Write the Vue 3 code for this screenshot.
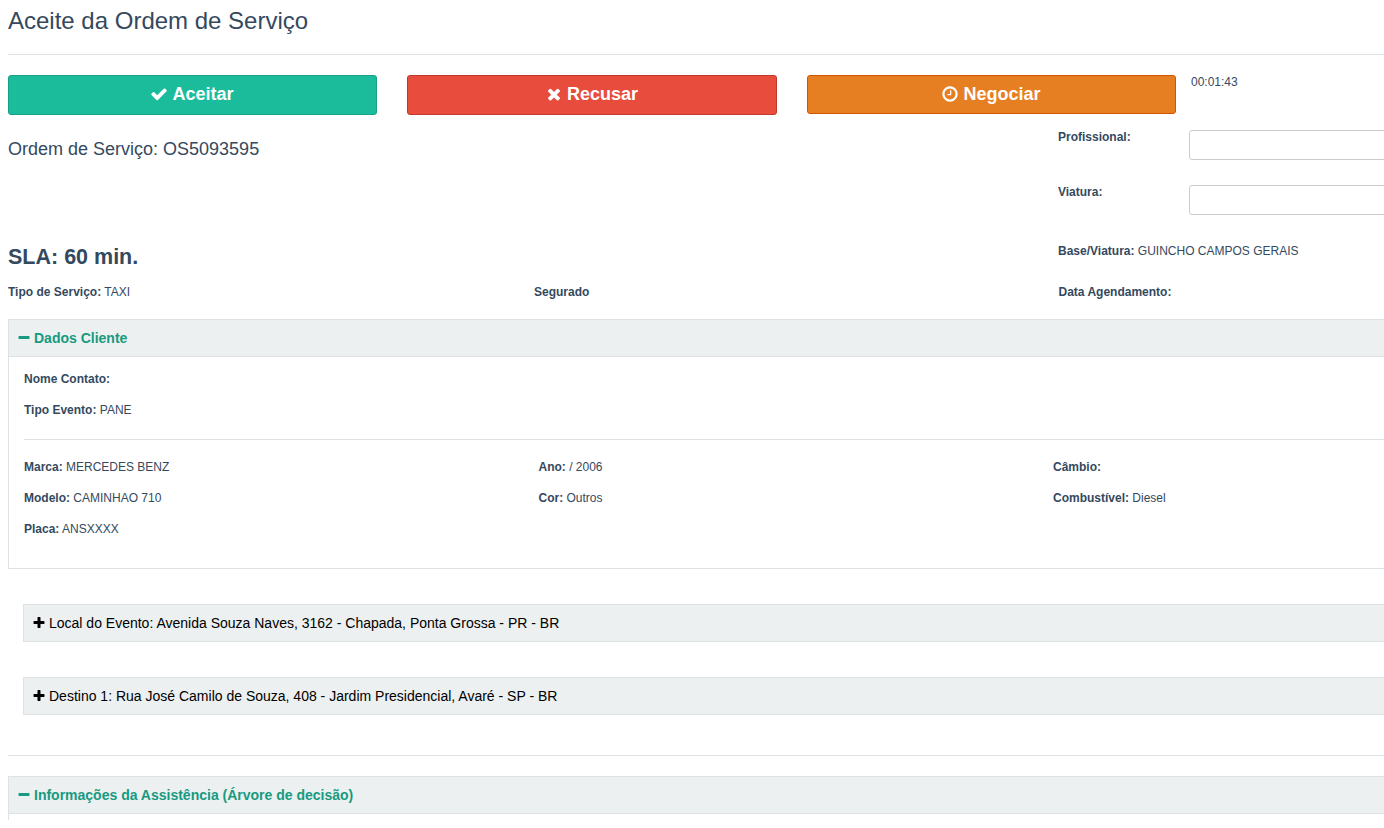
<script setup>
const icons = {
  check: 'M1671 566q0 40-28 68l-724 724-136 136q-28 28-68 28t-68-28l-136-136-362-362q-28-28-28-68t28-68l136-136q28-28 68-28t68 28l294 295 656-657q28-28 68-28t68 28l136 136q28 28 28 68z',
  times: 'M1490 1322q0 40-28 68l-136 136q-28 28-68 28t-68-28l-294-294-294 294q-28 28-68 28t-68-28l-136-136q-28-28-28-68t28-68l294-294-294-294q-28-28-28-68t28-68l136-136q28-28 68-28t68 28l294 294 294-294q28-28 68-28t68 28l136 136q28 28 28 68t-28 68l-294 294 294 294q28 28 28 68z',
  clock: 'M1024 544v448q0 14-9 23t-23 9h-320q-14 0-23-9t-9-23v-64q0-14 9-23t23-9h224v-352q0-14 9-23t23-9h64q14 0 23 9t9 23zm416 352q0-148-73-273t-198-198-273-73-273 73-198 198-73 273 73 273 198 198 273 73 273-73 198-198 73-273zm224 0q0 209-103 385.5t-279.5 279.5-385.5 103-385.5-103-279.5-279.5-103-385.5 103-385.5 279.5-279.5 385.5-103 385.5 103 279.5 279.5 103 385.5z',
  plus: 'M1600 736v192q0 40-28 68t-68 28h-416v416q0 40-28 68t-68 28h-192q-40 0-68-28t-28-68v-416h-416q-40 0-68-28t-28-68v-192q0-40 28-68t68-28h416v-416q0-40 28-68t68-28h192q40 0 68 28t28 68v416h416q40 0 68 28t28 68z',
  minus: 'M1600 736v192q0 40-28 68t-68 28h-1216q-40 0-68-28t-28-68v-192q0-40 28-68t68-28h1216q40 0 68 28t28 68z'
}
const vehicle = [
  [['Marca:', 'MERCEDES BENZ'], ['Ano:', '/ 2006'], ['Câmbio:', '']],
  [['Modelo:', 'CAMINHAO 710'], ['Cor:', 'Outros'], ['Combustível:', 'Diesel']],
  [['Placa:', 'ANSXXXX'], ['', ''], ['', '']]
]
const addresses = [
  'Local do Evento: Avenida Souza Naves, 3162 - Chapada, Ponta Grossa - PR - BR',
  'Destino 1: Rua José Camilo de Souza, 408 - Jardim Presidencial, Avaré - SP - BR'
]
</script>

<template>
  <div class="viewport">
    <div class="page">
      <h3 class="title">Aceite da Ordem de Serviço</h3>
      <hr class="rule title-rule" />

      <div class="actions">
        <button class="btn green"><svg class="ico" viewBox="0 0 1792 1792"><path :d="icons.check" /></svg> Aceitar</button>
        <button class="btn red"><svg class="ico" viewBox="0 0 1792 1792"><path :d="icons.times" /></svg> Recusar</button>
        <button class="btn orange short"><svg class="ico" viewBox="0 0 1792 1792"><path :d="icons.clock" /></svg> Negociar</button>
        <span class="timer">00:01:43</span>
      </div>

      <div class="summary">
        <div class="summary-left">
          <h4 class="order">Ordem de Serviço: OS5093595</h4>
          <h3 class="sla">SLA: 60 min.</h3>
        </div>
        <div class="summary-right">
          <div class="field"><label>Profissional:</label><input type="text" /></div>
          <div class="field"><label>Viatura:</label><input type="text" /></div>
          <div class="base"><b>Base/Viatura:</b> GUINCHO CAMPOS GERAIS</div>
        </div>
      </div>

      <div class="meta">
        <div><b>Tipo de Serviço:</b> TAXI</div>
        <div><b>Segurado</b></div>
        <div><b>Data Agendamento:</b></div>
      </div>

      <section class="panel">
        <header class="panel-head">
          <svg class="ico small" viewBox="0 0 1792 1792"><path :d="icons.minus" /></svg>
          Dados Cliente
        </header>
        <div class="panel-body">
          <p class="line"><b>Nome Contato:</b></p>
          <p class="line"><b>Tipo Evento:</b> PANE</p>
          <hr class="rule body-rule" />
          <div v-for="(row, r) in vehicle" :key="r" class="vehicle-row">
            <div v-for="(cell, c) in row" :key="c"><b>{{ cell[0] }}</b> {{ cell[1] }}</div>
          </div>
        </div>
      </section>

      <div class="addresses">
        <div v-for="a in addresses" :key="a" class="address">
          <svg class="ico plus" viewBox="0 0 1792 1792"><path :d="icons.plus" /></svg>
          {{ a }}
        </div>
      </div>

      <hr class="rule lower-rule" />

      <section class="panel last">
        <header class="panel-head">
          <svg class="ico small" viewBox="0 0 1792 1792"><path :d="icons.minus" /></svg>
          Informações da Assistência (Árvore de decisão)
        </header>
        <div class="stub"></div>
      </section>
    </div>
  </div>
</template>

<style>
html, body { margin: 0; background: #fff; }
</style>

<style scoped>
.viewport {
  width: 1384px;
  height: 828px;
  overflow: hidden;
  background: #fff;
  font-family: "Liberation Sans", Arial, sans-serif;
  font-size: 12px;
  color: #34495e;
}
.page { width: 1400px; padding-left: 8px; box-sizing: border-box; }
.title { margin: 0; padding-top: 8px; height: 54px; box-sizing: border-box; font-size: 24px; line-height: 26px; font-weight: 400; }
.rule { border: 0; border-top: 1px solid #dfe2e4; margin: 0; }
.title-rule { margin-bottom: 20px; }

.actions { display: flex; align-items: flex-start; height: 40px; }
.btn {
  flex: none;
  width: 369px;
  height: 40px;
  margin-right: 30px;
  padding: 0 1px 2px 0;
  border: 1px solid;
  border-radius: 3px;
  color: #fff;
  font: 700 18px/20px "Liberation Sans", Arial, sans-serif;
  display: flex;
  align-items: center;
  justify-content: center;
  gap: 4px;
}
.red { width: 370px; }
.btn.short { height: 39px; margin-right: 15px; width: 369px; }
.green { background: #1abc9c; border-color: #16a085; }
.red { background: #e74c3c; border-color: #c0392b; }
.orange { background: #e67e22; border-color: #d35400; }
.ico { width: 18px; height: 18px; fill: currentColor; flex: none; }
.timer { line-height: 14px; }

.summary { display: flex; height: 170px; }
.summary-left { flex: none; width: 1050px; }
.order { margin: 0; padding-top: 23px; font-size: 18px; line-height: 22px; font-weight: 400; }
.sla { margin: 0; padding-top: 84px; font-size: 21.5px; line-height: 26px; font-weight: 700; }
.summary-right { flex: none; padding-top: 15px; }
.field { display: flex; height: 55px; }
.field label { width: 131px; font-weight: 700; line-height: 14px; }
.field input {
  width: 220px;
  height: 30px;
  padding: 0;
  box-sizing: border-box;
  border: 1px solid #ccc;
  border-radius: 3px;
  background: #fff;
}
.base { margin-top: 4px; line-height: 14px; }

.meta { display: grid; grid-template-columns: 526px 524.5px 1fr; height: 34px; line-height: 14px; }

.panel { border: 1px solid #dfe2e4; }
.panel-head {
  height: 37px;
  box-sizing: border-box;
  padding-left: 8px;
  display: flex;
  align-items: center;
  gap: 3px;
  background: #ecf0f1;
  border-bottom: 1px solid #dfe2e4;
  color: #179a7f;
  font-size: 14px;
  font-weight: 700;
}
.small { width: 14px; height: 14px; }
.panel-body { height: 211px; box-sizing: border-box; padding: 15px 15px 0; }
.line { margin: 0 0 17px; line-height: 14px; }
.body-rule { margin: 22px 0 20px; }
.vehicle-row { display: grid; grid-template-columns: 514.5px 514.5px 1fr; height: 31px; line-height: 14px; }

.addresses { margin-top: 35px; margin-left: 15px; display: flex; flex-direction: column; gap: 35px; }
.address {
  height: 38px;
  box-sizing: border-box;
  padding-left: 8px;
  display: flex;
  align-items: center;
  gap: 3px;
  background: #ecf0f1;
  border: 1px solid #dfe2e4;
  color: #000;
  font-size: 14px;
}
.plus { width: 14px; height: 14px; }
.lower-rule { margin-top: 40px; margin-bottom: 20px; }
.last { border-bottom: 0; }
.stub { height: 6px; }
</style>
